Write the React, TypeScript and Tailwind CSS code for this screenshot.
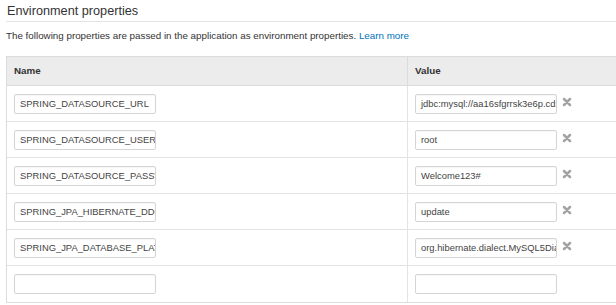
import React from "react";

const rows = [
  { name: "SPRING_DATASOURCE_URL", value: "jdbc:mysql://aa16sfgrrsk3e6p.cdxyz.us-east-1.rds.amazonaws.com", x: true },
  { name: "SPRING_DATASOURCE_USERNAME", value: "root", x: true },
  { name: "SPRING_DATASOURCE_PASSWORD", value: "Welcome123#", x: true },
  { name: "SPRING_JPA_HIBERNATE_DDL_AUTO", value: "update", x: true },
  { name: "SPRING_JPA_DATABASE_PLATFORM", value: "org.hibernate.dialect.MySQL5Dialect", x: true },
  { name: "", value: "", x: false },
];

function XIcon() {
  return (
    <svg width="10" height="10" viewBox="0 0 10 10" className="block">
      <path d="M2 2 L8 8 M8 2 L2 8" stroke="#a3a3a3" strokeWidth="2.5" strokeLinecap="round" />
    </svg>
  );
}

function Field({ value }: { value: string }) {
  return (
    <div className="h-[20px] w-[142px] overflow-hidden whitespace-nowrap rounded-[2px] border border-[#d5d5d5] bg-white px-[5px] text-[9.4px] leading-[18px] text-[#444] shadow-[inset_0_1px_1px_rgba(0,0,0,0.04)]">
      {value}
    </div>
  );
}

export default function App() {
  return (
    <div className="h-[305px] w-[616px] overflow-hidden bg-white text-[#333]" style={{ fontFamily: '"Liberation Sans", Arial, sans-serif' }}>
      <div className="pl-[6px] pt-[3px]">
        <div className="pl-[1px] text-[12.7px] leading-[17px] text-[#333]">Environment properties</div>
        <div className="mt-[1px] h-px bg-[#e3e3e3]" />
        <div className="mt-[8px] text-[9.8px] leading-[12px] text-[#333]">
          The following properties are passed in the application as environment properties.{" "}
          <span className="text-[#0073bb]">Learn more</span>
        </div>
        <div className="mt-[14px] w-[620px] border border-[#dcdcdc]">
          <div className="flex h-[29px] items-center border-b border-[#dcdcdc] bg-[#ececec] text-[9.8px] font-bold text-[#333]">
            <div className="w-[400px] pl-[7px]">Name</div>
            <div className="flex h-full items-center border-l border-[#dcdcdc] pl-[7px]">Value</div>
          </div>
          {rows.map((r, i) => (
            <div key={i} className={`flex h-[36px] ${i < rows.length - 1 ? "border-b border-[#e3e3e3]" : ""}`}>
              <div className="flex w-[400px] items-center pl-[7px]">
                <Field value={r.name} />
              </div>
              <div className="flex items-center border-l border-[#e3e3e3] pl-[7px]">
                <Field value={r.value} />
                {r.x && (
                  <div className="ml-[5px] -mt-[3px]">
                    <XIcon />
                  </div>
                )}
              </div>
            </div>
          ))}
        </div>
      </div>
    </div>
  );
}
